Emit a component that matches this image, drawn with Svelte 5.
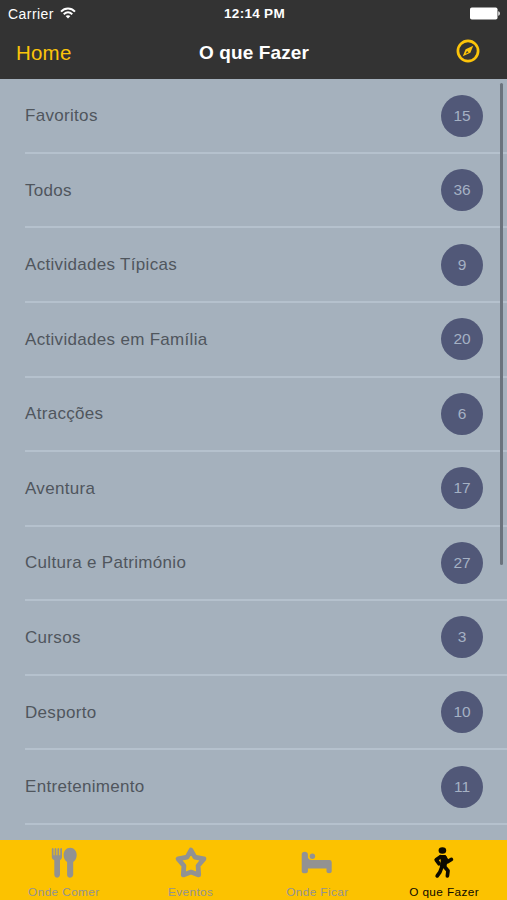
<script lang="ts">
  const categories = [
    { name: 'Favoritos', count: 15 },
    { name: 'Todos', count: 36 },
    { name: 'Actividades Típicas', count: 9 },
    { name: 'Actividades em Família', count: 20 },
    { name: 'Atracções', count: 6 },
    { name: 'Aventura', count: 17 },
    { name: 'Cultura e Património', count: 27 },
    { name: 'Cursos', count: 3 },
    { name: 'Desporto', count: 10 },
    { name: 'Entretenimento', count: 11 }
  ];

  const tabs = [
    { label: 'Onde Comer', icon: 'food' },
    { label: 'Eventos', icon: 'star' },
    { label: 'Onde Ficar', icon: 'bed' },
    { label: 'O que Fazer', icon: 'walk' }
  ];

  let active = 'walk';
</script>

<div class="screen">
  <header>
    <div class="status">
      <div class="carrier">
        <span>Carrier</span>
        <svg width="16" height="12" viewBox="0 0 16 12" fill="none" stroke="#fff" stroke-width="1.9">
          <path d="M1 4.6C5 .4 11 .4 15 4.6" />
          <path d="M3.7 7.3c2.6-2.5 6-2.5 8.6 0" />
          <path d="M8 11.6 5.6 9.1c1.4-1.3 3.4-1.3 4.8 0z" fill="#fff" stroke="none" />
        </svg>
      </div>
      <span class="time">12:14 PM</span>
      <svg class="battery" width="31" height="13" viewBox="0 0 31 13" fill="#fff">
        <rect x="0" y=".5" width="27.5" height="12" rx="1.8" />
        <path d="M28.3 4.2c2 .5 2 4.1 0 4.6z" />
      </svg>
    </div>
    <nav>
      <span class="back">Home</span>
      <h1>O que Fazer</h1>
      <svg class="compass" width="24" height="24" viewBox="0 0 24 24">
        <circle cx="12" cy="12" r="10.1" fill="none" stroke="#fcc40a" stroke-width="2.7" />
        <path d="M17.2 6.8 14.4 13.8 6.8 17.2 9.6 10.2z" fill="#fcc40a" />
        <path d="M11 11.9 12.6 13.3 9.6 14.7z" fill="#333" />
      </svg>
    </nav>
  </header>

  <main>
    <ul>
      {#each categories as category}
        <li>
          <span class="name">{category.name}</span>
          <span class="count">{category.count}</span>
        </li>
      {/each}
    </ul>
    <div class="scrollbar"></div>
  </main>

  <footer>
    {#each tabs as tab}
      <div class="tab" class:active={tab.icon === active}>
        <svg width="34" height="34" viewBox="0 0 34 34" fill="currentColor">
          {#if tab.icon === 'food'}
            <path d="M4.8 2.8q.9-1.4 1.8 0v6.4h1V2.8q.8-1.4 1.8 0v6.4h1V2.8q1-1.4 1.8 0v6.4h1V2.8q1-1.4 1.8 0v8.4q0 2.1-2 3v14.9q-.5 2.6-2.9 2.6t-2.8-2.6V14.2q-2.5-.9-2.5-3z" />
            <path d="M23.1 1.7c4 0 6.6 3.5 6.6 7.4 0 3.2-1.4 5.6-3.5 6.9v13q-.5 2.7-3.1 2.7t-3-2.7V16c-2.2-1.3-3.5-3.7-3.5-6.9 0-3.9 2.5-7.4 6.5-7.4z" />
          {:else if tab.icon === 'star'}
            <path d="M17 4.1 20.9 11.1 29.9 12.9 24.1 19.8 24.7 28.9 17 26.1 9.3 28.9 9.9 19.8 4.1 12.9 13.1 11.1z" fill="none" stroke="currentColor" stroke-width="4.8" stroke-linejoin="round" />
          {:else if tab.icon === 'bed'}
            <path d="M1.7 8.2q0-2.5 3-2.5t3.2 2.5v3.5q1 2.3 3.6 2.4h18q2.2 0 2.2 2.2v9.2q0 1.8-2.6 1.8t-2.6-1.8v-3.1H7.9v3.1q0 1.8-3.1 1.8t-3.1-1.8z" />
            <circle cx="12.4" cy="10.3" r="2.7" />
          {:else}
            <ellipse cx="15.4" cy="4.5" rx="3.8" ry="3.2" />
            <path d="M12.5 9h6l2.4 4.4-1.5 7.4h-6.6l1-6z" />
            <g fill="none" stroke="currentColor" stroke-width="3.7" stroke-linecap="round" stroke-linejoin="round">
              <path d="M13.5 10.7 9.2 13.8 12 17.7" />
              <path d="M18 11.4 20.3 15.8 24.4 13.4" />
              <path d="M14.8 21.2 12.9 26.2 10.2 29.9" />
              <path d="M17.5 20.8 21 24.8 20.4 29.9" />
            </g>
          {/if}
        </svg>
        <span>{tab.label}</span>
      </div>
    {/each}
  </footer>
</div>

<style>
  :global(body) {
    margin: 0;
  }

  .screen {
    display: flex;
    flex-direction: column;
    width: 507px;
    height: 900px;
    overflow: hidden;
    background: #a5b1bd;
    font-family: "Liberation Sans", Arial, sans-serif;
  }

  header {
    flex: 0 0 79px;
    background: #333;
    color: #fff;
  }

  .status {
    display: grid;
    grid-template-columns: 1fr auto 1fr;
    align-items: center;
    height: 27px;
    padding: 0 6px 0 8px;
    font-size: 14px;
    letter-spacing: 0.45px;
  }

  .carrier {
    display: flex;
    align-items: center;
    gap: 6px;
  }

  .carrier svg {
    margin-bottom: 2px;
  }

  .time {
    font-size: 13.5px;
    font-weight: bold;
    letter-spacing: 0.3px;
  }

  .battery {
    justify-self: end;
  }

  nav {
    display: grid;
    grid-template-columns: 1fr auto 1fr;
    align-items: center;
    height: 50px;
    padding: 0 27px 0 16px;
  }

  .back {
    margin-top: 1px;
    color: #fcc40a;
    font-size: 20.5px;
    letter-spacing: 0.2px;
  }

  h1 {
    margin: 2px 0 0 12px;
    font-size: 19px;
    font-weight: bold;
    letter-spacing: 0.1px;
  }

  .compass {
    justify-self: end;
    margin-bottom: 2px;
  }

  main {
    flex: 1;
    position: relative;
    overflow: hidden;
  }

  ul {
    margin: 0;
    padding: 0.4px 0 0 25px;
    list-style: none;
  }

  li {
    display: flex;
    align-items: center;
    justify-content: space-between;
    box-sizing: border-box;
    height: 74.55px;
    padding-right: 24px;
    border-bottom: 2px solid #b5c1cd;
  }

  .name {
    padding-top: 1px;
    color: #50565d;
    font-size: 17px;
    letter-spacing: 0.31px;
  }

  .count {
    width: 42px;
    height: 42px;
    border-radius: 50%;
    background: #515878;
    color: #a5b1c4;
    font-size: 15.5px;
    line-height: 42px;
    text-align: center;
  }

  /* floats over the list like the native indicator */
  .scrollbar {
    position: absolute;
    top: 4px;
    right: 4px;
    width: 3px;
    height: 482px;
    border-radius: 2px;
    background: #6b737d;
  }

  footer {
    flex: 0 0 60px;
    display: grid;
    grid-template-columns: repeat(4, 1fr);
    background: #fcc200;
  }

  .tab {
    display: flex;
    flex-direction: column;
    align-items: center;
    padding: 6px 0 0 1px;
    color: #929292;
    font-size: 11.8px;
    letter-spacing: 0.4px;
  }

  .tab span {
    margin-top: 5px;
    line-height: 14px;
  }

  .active {
    color: #0c0a00;
  }
</style>
